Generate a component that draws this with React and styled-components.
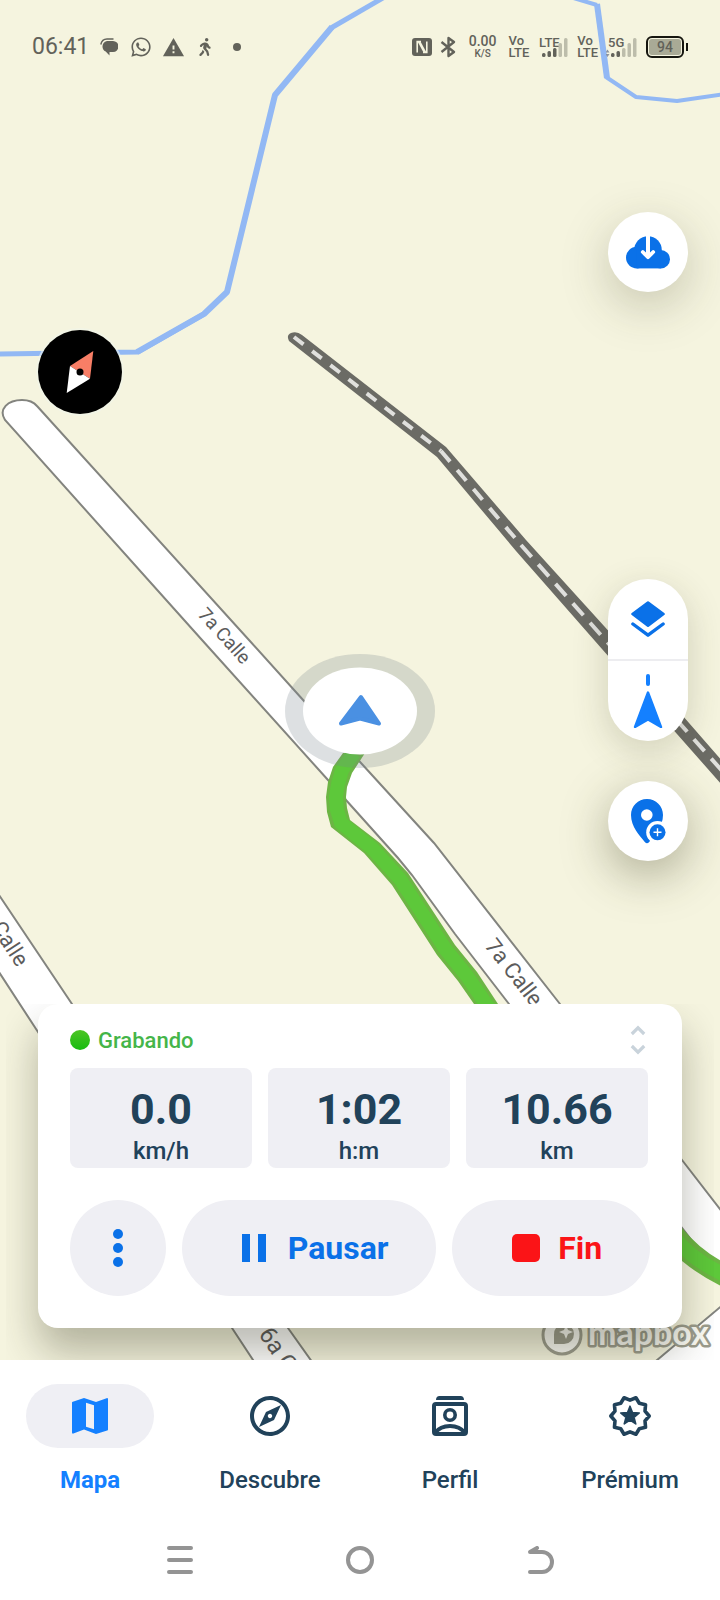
import React from 'react';
import styled, { createGlobalStyle } from 'styled-components';
import { MdOutlineExplore, MdWarning } from 'react-icons/md';
import { FaWalking, FaWhatsapp } from 'react-icons/fa';

const colors = {
	land: '#f5f4df',
	river: '#92b8f4',
	rail: '#6b6b65',
	casing: '#83847f',
	status: '#62625a',
	blue: '#0a71e8',
	bright: '#1480ff',
	navy: '#21425a',
	surface: '#efeff4',
	system: '#949494'
};

const GlobalStyle = createGlobalStyle`
	* { box-sizing: border-box; }
	body {
		margin: 0;
		background: #fff;
		font-family: Roboto, 'Liberation Sans', sans-serif;
	}
	button {
		margin: 0;
		padding: 0;
		border: 0;
		background: none;
		font: inherit;
		color: inherit;
		cursor: pointer;
	}
	svg { display: block; flex: none; }
`;

const Screen = styled.div`
	display: flex;
	flex-direction: column;
	min-height: 100vh;
`;

const MapArea = styled.main`
	position: relative;
	flex: 1;
	display: flex;
	flex-direction: column;
	overflow: hidden;
	padding-bottom: 32px;
	background: ${colors.land};
`;

const MapCanvas = styled.svg`
	position: absolute;
	inset: 0;
	width: 100%;
	height: 100%;
	z-index: 0;
`;

const RoadLabel = styled.text`
	font-size: ${({ $size }) => $size}px;
	fill: #5c5c5c;
	stroke: #fff;
	stroke-width: 2px;
	paint-order: stroke;
`;

const Wordmark = styled.text`
	font-family: Lato, sans-serif;
	font-size: 34px;
	font-weight: 700;
	fill: #fafaf4;
	stroke: #9c9c8d;
	stroke-width: 5px;
	stroke-linejoin: round;
	paint-order: stroke;
`;

const StatusBar = styled.header`
	position: relative;
	display: flex;
	justify-content: space-between;
	align-items: center;
	height: 94px;
	padding: 0 32px;
	color: ${colors.status};
`;

const StatusGroup = styled.div`
	display: flex;
	align-items: center;
	gap: ${({ $gap }) => $gap}px;
`;

const Clock = styled.time`
	font-size: 23px;
	line-height: 28px;
`;

const Notifications = styled.div`
	display: grid;
	grid-template-columns: repeat(5, 32px);
	align-items: center;
	justify-items: center;
`;

const StackedText = styled.div`
	display: flex;
	flex-direction: column;
	align-items: flex-start;
	font-size: 13px;
	font-weight: 500;
	line-height: 12px;
`;

const RateText = styled(StackedText)`
	align-items: center;
	width: 36px;
`;

const Rate = styled.span`
	font-size: 14px;
	line-height: 13px;
`;

const RateUnit = styled.span`
	font-size: 10px;
`;

const SignalText = styled.text`
	font-size: 13px;
	font-weight: 500;
	fill: ${colors.status};
`;

const Battery = styled.div`
	display: flex;
	align-items: center;
	gap: 2px;

	&::after {
		content: '';
		width: 2px;
		height: 8px;
		background: #16160f;
	}
`;

const BatteryBody = styled.div`
	width: 38px;
	height: 22px;
	padding: 1px;
	border: 2px solid #16160f;
	border-radius: 6px;
`;

const BatteryLevel = styled.div`
	border-radius: 3px;
	background: #a9aa96;
	font-size: 14px;
	font-weight: 500;
	line-height: 16px;
	text-align: center;
`;

const Controls = styled.div`
	position: relative;
	flex: 1;
	display: flex;
	justify-content: space-between;
	padding: 118px 32px 143px 38px;
`;

const CompassButton = styled.button`
	align-self: flex-start;
	margin-top: 118px;
	border-radius: 50%;
	box-shadow: 0 0 0 2px rgba(240, 245, 235, 0.6);
`;

const ControlColumn = styled.div`
	display: flex;
	flex-direction: column;
	gap: 40px;
`;

const RoundButton = styled.button`
	display: flex;
	align-items: center;
	justify-content: center;
	width: 80px;
	height: 80px;
	border-radius: 50%;
	background: #fff;
	color: ${colors.blue};
	box-shadow: 0 14px 48px rgba(60, 60, 30, ${({ $depth }) => $depth || 0.25});
`;

const ButtonStack = styled.div`
	display: flex;
	flex-direction: column;
	margin-top: auto;
	border-radius: 40px;
	background: #fff;
	box-shadow: 0 10px 36px rgba(60, 60, 30, 0.2);
`;

const StackButton = styled.button`
	display: flex;
	align-items: center;
	justify-content: center;
	width: 80px;
	height: 80px;
	color: ${({ $active }) => ($active ? colors.bright : colors.blue)};

	& + & {
		height: 82px;
		border-top: 2px solid #ededf0;
	}
`;

const RecordCard = styled.section`
	position: relative;
	margin: 0 38px;
	padding: 0 32px 32px;
	border-radius: 20px;
	background: #fff;
	box-shadow: 0 24px 40px rgba(40, 40, 20, 0.32);
	clip-path: inset(0 -32px -32px -32px);
`;

const CardHeader = styled.div`
	display: flex;
	align-items: center;
	justify-content: space-between;
	height: 64px;
	padding-top: 8px;
`;

const Recording = styled.div`
	display: flex;
	align-items: center;
	gap: 8px;
	color: #45b549;
	font-size: 22px;
	font-weight: 500;

	&::before {
		content: '';
		width: 20px;
		height: 20px;
		border-radius: 50%;
		background: linear-gradient(#4cc424, #18bc10);
	}
`;

const ExpandButton = styled.button`
	display: flex;
	justify-content: center;
	width: 24px;
	color: #c9d3db;
`;

const Stats = styled.div`
	display: grid;
	grid-template-columns: repeat(3, 1fr);
	gap: 16px;
	padding-right: 2px;
`;

const Stat = styled.div`
	display: flex;
	flex-direction: column;
	align-items: center;
	padding-top: 16px;
	border-radius: 8px;
	background: ${colors.surface};
	color: ${colors.navy};
`;

const StatValue = styled.strong`
	font-size: 43px;
	font-weight: 700;
	line-height: 50px;
`;

const StatUnit = styled.span`
	font-size: 24px;
	font-weight: 500;
	line-height: 34px;
`;

const Actions = styled.div`
	display: grid;
	grid-template-columns: 96px 9fr 7fr;
	gap: 16px;
	margin-top: 32px;
`;

const ActionButton = styled.button`
	display: flex;
	align-items: center;
	justify-content: center;
	gap: 18px;
	height: 96px;
	border-radius: 48px;
	background: ${colors.surface};
	color: ${({ $danger }) => ($danger ? '#fb1417' : colors.blue)};
	font-size: 32px;
	font-weight: 700;
`;

const WideActionButton = styled(ActionButton)`
	padding-left: 12px;
`;

const TabBar = styled.nav`
	display: grid;
	grid-template-columns: repeat(4, 1fr);
	padding: 24px 0;
	background: #fff;
`;

const Tab = styled.a`
	display: flex;
	flex-direction: column;
	align-items: center;
	gap: 16px;
	color: ${({ $active }) => ($active ? colors.bright : colors.navy)};
	font-size: 24px;
	font-weight: ${({ $active }) => ($active ? 700 : 500)};
	line-height: 32px;
	text-decoration: none;
`;

const TabPill = styled.span`
	display: flex;
	align-items: center;
	justify-content: center;
	width: 128px;
	height: 64px;
	border-radius: 32px;
	background: ${({ $active }) => ($active ? colors.surface : 'transparent')};
`;

const SystemBar = styled.div`
	display: grid;
	grid-template-columns: repeat(3, 1fr);
	height: 80px;
	padding: 0 12.5%;
	background: #fff;
	color: ${colors.system};
`;

const SystemButton = styled.button`
	display: flex;
	align-items: center;
	justify-content: center;
`;

// closed star outline with `count` tips, centred on a 24x24 grid
const starPath = (count, outer, inner, start = -90) => {
	const points = [];
	for (let i = 0; i < count * 2; i++) {
		const radius = i % 2 ? inner : outer;
		const angle = ((start + (i * 180) / count) * Math.PI) / 180;
		points.push(`${(12 + radius * Math.cos(angle)).toFixed(2)} ${(12 + radius * Math.sin(angle)).toFixed(2)}`);
	}
	return `M${points.join('L')}z`;
};

const ChatIcon = () => (
	<svg width='18' height='18' viewBox='0 0 18 18' fill='currentColor'>
		<path d='M7 3h6a5 5 0 0 1 0 11h-3.500v3.500l-3.800-4C1 11.500 1.500 4 7 3z' />
		<path d='M.8 6.500C1.500 3 4 1 7 1h6.500' fill='none' stroke='currentColor' strokeWidth='1.400' />
	</svg>
);

const NfcIcon = () => (
	<svg width='20' height='20' viewBox='0 0 20 20' fill='none'>
		<rect x='0' y='1' width='20' height='18' rx='3' fill='currentColor' />
		<path d='M9 4.500H5.200v11M11 15.500h3.800v-11' stroke={colors.land} strokeWidth='1.600' />
		<path d='M5.500 4.500h3l6 11h-3z' fill={colors.land} />
	</svg>
);

const BluetoothIcon = () => (
	<svg width='17' height='22' viewBox='0 0 17 22' fill='none' stroke='currentColor' strokeWidth='2.400'>
		<path d='M1.500 6L14 16 8.500 20V2L14 6 1.500 16' strokeLinejoin='round' />
	</svg>
);

const Signal = ({ label, level, traffic }) => (
	<svg width='32' height='24' viewBox='0 0 32 24'>
		<SignalText x='2' y='12'>{label}</SignalText>
		{traffic && <path d='M-.5 17.500h4L1.500 14.500zM-.5 19h4l-2 3z' fill='#8c93a0' />}
		{[4, 6, 9, 14, 19].map((height, i) => (
			<rect
				key={height}
				x={5 + i * 5.5}
				y={22 - height}
				width='3.500'
				height={height}
				rx='1.500'
				fill={i < level ? colors.status : '#bdbdab'}
			/>
		))}
	</svg>
);

const CompassIcon = () => (
	<svg width='84' height='84' viewBox='0 0 84 84'>
		<circle cx='42' cy='42' r='42' />
		<path d='M55.300 21L32 36l20 12.700z' fill='#f87e66' />
		<path d='M28.700 63L32 36l20 12.700z' fill='#fff' />
		<circle cx='42' cy='42' r='3.500' />
	</svg>
);

const CloudIcon = () => (
	<svg width='44' height='33' viewBox='0 0 44 33' fill='none'>
		<g fill='currentColor'>
			<circle cx='22' cy='14' r='13.800' />
			<circle cx='10.800' cy='21.600' r='10.800' />
			<circle cx='34.800' cy='23.200' r='9.200' />
			<path d='M10.800 14h24v18.400h-24z' />
		</g>
		<path d='M22-1v20' stroke='#fff' strokeWidth='4' />
		<path d='M16.800 16l5.200 5.200 5.200-5.200' stroke='#fff' strokeWidth='3.800' strokeLinecap='round' strokeLinejoin='round' />
	</svg>
);

const LayersIcon = () => (
	<svg width='34' height='37' viewBox='0 0 34 37' fill='none' stroke='currentColor' strokeLinejoin='round' strokeLinecap='round'>
		<path d='M17 1.500l15.500 11.500L17 24.700 1.500 13z' fill='currentColor' strokeWidth='2.600' />
		<path d='M1.900 23L17 34.200 32.100 23' strokeWidth='3.400' />
	</svg>
);

const HeadingIcon = () => (
	<svg width='30' height='54' viewBox='0 0 30 54' fill='currentColor' stroke='currentColor' strokeLinejoin='round' strokeLinecap='round'>
		<path d='M15 2v8' strokeWidth='4' />
		<path d='M15 18.500L28 53l-13-7.500L2 53z' strokeWidth='2.400' />
	</svg>
);

const AddPlaceIcon = () => (
	<svg width='35' height='45' viewBox='0 0 35 45'>
		<path
			d='M16 0C7 0 0 7 0 16c0 12 8.500 20.500 14 27.200q2 2 4 0C23.500 36.500 32 28 32 16 32 7 25 0 16 0z'
			fill='currentColor'
		/>
		<circle cx='15.800' cy='16' r='5.800' fill='#fff' />
		<circle cx='26.500' cy='33.300' r='11.300' fill='#fff' />
		<circle cx='26.500' cy='33.300' r='8' fill='currentColor' />
		<path d='M22.500 33.300h8M26.500 29.300v8' stroke='#fff' strokeWidth='1.400' />
	</svg>
);

const ExpandIcon = () => (
	<svg width='16' height='30' viewBox='0 0 16 30' fill='none' stroke='currentColor' strokeWidth='3.200'>
		<path d='M1.800 9L8 2.800 14.200 9M1.800 21L8 27.200l6.200-6.200' />
	</svg>
);

const MoreIcon = () => (
	<svg width='10' height='38' viewBox='0 0 10 38' fill='currentColor'>
		<circle cx='5' cy='5' r='5' />
		<circle cx='5' cy='19' r='5' />
		<circle cx='5' cy='33' r='5' />
	</svg>
);

const PauseIcon = () => (
	<svg width='28' height='28' viewBox='0 0 28 28' fill='currentColor'>
		<path d='M0 0h8v28H0zM16 0h8v28h-8z' />
	</svg>
);

const StopIcon = () => (
	<svg width='28' height='28' viewBox='0 0 28 28' fill='currentColor'>
		<rect width='28' height='28' rx='5' />
	</svg>
);

const MapIcon = () => (
	<svg width='48' height='48' viewBox='0 0 24 24' fill='currentColor' fillRule='evenodd'>
		<path d='M3 5.400q0-.4.400-.5L9 3l6 2 5.300-1.900q.7-.2.700.5V18.700q0 .4-.4.500L15 21l-6-2.200-5.300 2q-.7.200-.7-.5zM10 5.350v12l4 1.250V6.600z' />
	</svg>
);

const ProfileIcon = () => (
	<svg width='48' height='48' viewBox='0 0 24 24' fill='none' stroke='currentColor' strokeWidth='2'>
		<path d='M5 4c0-1.200.7-2 1.700-2h10.600c1 0 1.700.8 1.700 2z' fill='currentColor' stroke='none' />
		<rect x='4' y='6' width='16' height='15' rx='1' />
		<circle cx='12' cy='11.500' r='2.600' strokeWidth='1.800' />
		<path d='M4.500 20.500C8 15.900 16 15.900 19.500 20.500' />
	</svg>
);

const PremiumIcon = () => (
	<svg width='48' height='48' viewBox='0 0 24 24' stroke='currentColor' strokeLinejoin='round'>
		<path d={starPath(10, 9.6, 7.9, 0)} fill='none' strokeWidth='1.800' />
		<path d={starPath(5, 4.9, 2.1)} fill='currentColor' strokeWidth='.8' />
	</svg>
);

const RecentsIcon = () => (
	<svg width='28' height='28' viewBox='0 0 28 28' fill='none' stroke='currentColor' strokeWidth='4' strokeLinecap='round'>
		<path d='M3 2h22M3 14h22M3 26h22' />
	</svg>
);

const HomeIcon = () => (
	<svg width='28' height='28' viewBox='0 0 28 28' fill='none' stroke='currentColor' strokeWidth='4'>
		<circle cx='14' cy='14' r='12' />
	</svg>
);

const BackIcon = () => (
	<svg width='28' height='28' viewBox='0 0 28 28' fill='none' stroke='currentColor' strokeWidth='4' strokeLinecap='round' strokeLinejoin='round'>
		<path d='M4 26h12a10 10 0 0 0 0-20H4l7-4' />
	</svg>
);

const MapView = () => (
	<MapCanvas viewBox='0 0 720 1360' preserveAspectRatio='xMidYMid slice' role='img' aria-label='Mapa'>
		<g fill='none' stroke={colors.river} strokeLinejoin='bevel'>
			<path d='M-5 354L138 352 204 314' strokeWidth='5' />
			<path d='M137 352L204 314 227 292 275 95 332 27' strokeWidth='6' />
			<path d='M331 28L388-5' strokeWidth='5' />
			<path d='M570-3L597 5' strokeWidth='4' />
			<path d='M597 4L607 78' strokeWidth='6' />
			<path d='M606 77L636 97 677 101 725 94' strokeWidth='4' />
		</g>

		<path
			d='M289 341Q286 335 291 333 297 331 302 335L446 447 526 540 614 637 730 770 722 785 602 649 516 551 437 457z'
			fill={colors.rail}
		/>
		<g fill='none' stroke='#e0e0dd' strokeWidth='4'>
			<path d='M294 337L441 451' strokeDasharray='12 11' />
			<path d='M441 451L521 545' strokeDasharray='14 11' />
			<path d='M521 545L608 643 724 773' strokeDasharray='16 10' />
		</g>

		<g fill='#fff' stroke={colors.casing} strokeWidth='2'>
			<path d='M-5 889L72 1004 288 1328 315 1366 257 1366 232 1328 38 1032-5 966z' />
			<path d='M725 1303L650 1366H725z' />
			<path d='M5 420C-2 409 8 400 22 400Q32 400 37 406L249 640 304 701 361 763 434 843 560 1004 682 1160 730 1222V1290L509 1004 455 934 412 875 398 858 328 780 202 640z' />
		</g>

		<path
			d='M343 753L333 767 328 782 326 797 327 812 331 827 364 853 392 885 437 955 458 981 474 1004 560 1120 668 1246 682 1261Q700 1276 725 1288V1263Q700 1250 682 1228L600 1120 498 1004 477 972 455 945 408 873 380 843 350 820 347 808 346 797 347 787 352 773 365 753z'
			fill='#6cb544'
		/>
		<path
			d='M354 753L342 770 338 784 336 797 337 810 341 823 372 848 400 879 446 950 467 976 486 1004 580 1120 675 1238Q692 1260 725 1275'
			fill='none'
			stroke='#5dc83a'
			strokeWidth='14'
		/>

		<RoadLabel $size={19} transform='translate(197 615) rotate(48)'>7a Calle</RoadLabel>
		<RoadLabel $size={22} transform='translate(484 946) rotate(52)'>7a Calle</RoadLabel>
		<RoadLabel $size={22} transform='translate(17 968) rotate(57)' textAnchor='end'>7a Calle</RoadLabel>
		<RoadLabel $size={24} transform='translate(258 1334) rotate(56)'>6a Calle</RoadLabel>

		<ellipse cx='360' cy='711' rx='75' ry='57' fill='rgba(119,131,140,.25)' />
		<ellipse cx='360' cy='711' rx='57' ry='43.500' fill='#fff' />
		<path
			d='M361 697L379 723.500 360 718.500 341 723.500z'
			fill='#4a90e2'
			stroke='#4a90e2'
			strokeWidth='4'
			strokeLinejoin='round'
		/>

		<circle cx='562' cy='1335' r='19' fill='#fafaf4' stroke='#9c9c8d' strokeWidth='3' />
		<path d='M554 1344v-9a10 10 0 1 1 10 9z' fill='#9c9c8d' />
		<path d='M566 1325l2 5 5 2-5 2-2 5-2-5-5-2 5-2z' fill='#fafaf4' />
		<Wordmark x='588' y='1345'>mapbox</Wordmark>
	</MapCanvas>
);

const stats = [
	{ value: '0.0', unit: 'km/h' },
	{ value: '1:02', unit: 'h:m' },
	{ value: '10.66', unit: 'km' }
];

const tabs = [
	{ label: 'Mapa', icon: <MapIcon />, active: true },
	{ label: 'Descubre', icon: <MdOutlineExplore size={48} /> },
	{ label: 'Perfil', icon: <ProfileIcon /> },
	{ label: 'Prémium', icon: <PremiumIcon /> }
];

const PhoneStatus = () => (
	<StatusBar>
		<StatusGroup $gap={4}>
			<Clock>06:41</Clock>
			<Notifications>
				<ChatIcon />
				<FaWhatsapp size={22} />
				<MdWarning size={23} />
				<FaWalking size={18} />
				<svg width='8' height='8' viewBox='0 0 8 8' fill='currentColor'>
					<circle cx='4' cy='4' r='4' />
				</svg>
			</Notifications>
		</StatusGroup>
		<StatusGroup $gap={8}>
			<NfcIcon />
			<BluetoothIcon />
			<RateText>
				<Rate>0.00</Rate>
				<RateUnit>K/S</RateUnit>
			</RateText>
			<StackedText>
				<span>Vo</span>
				<span>LTE</span>
			</StackedText>
			<Signal label='LTE' level={3} />
			<StackedText>
				<span>Vo</span>
				<span>LTE</span>
			</StackedText>
			<Signal label='5G' level={2} traffic />
			<Battery>
				<BatteryBody>
					<BatteryLevel>94</BatteryLevel>
				</BatteryBody>
			</Battery>
		</StatusGroup>
	</StatusBar>
);

const RecordPanel = () => (
	<RecordCard>
		<CardHeader>
			<Recording>Grabando</Recording>
			<ExpandButton type='button' aria-label='Expandir'>
				<ExpandIcon />
			</ExpandButton>
		</CardHeader>
		<Stats>
			{stats.map(({ value, unit }) => (
				<Stat key={unit}>
					<StatValue>{value}</StatValue>
					<StatUnit>{unit}</StatUnit>
				</Stat>
			))}
		</Stats>
		<Actions>
			<ActionButton type='button' aria-label='Más opciones'>
				<MoreIcon />
			</ActionButton>
			<WideActionButton type='button'>
				<PauseIcon />
				Pausar
			</WideActionButton>
			<WideActionButton type='button' $danger>
				<StopIcon />
				Fin
			</WideActionButton>
		</Actions>
	</RecordCard>
);

const App = () => {
	return (
		<Screen>
			<GlobalStyle />
			<MapArea>
				<MapView />
				<PhoneStatus />
				<Controls>
					<CompassButton type='button' aria-label='Brújula'>
						<CompassIcon />
					</CompassButton>
					<ControlColumn>
						<RoundButton type='button' aria-label='Descargar mapa'>
							<CloudIcon />
						</RoundButton>
						<ButtonStack>
							<StackButton type='button' aria-label='Capas'>
								<LayersIcon />
							</StackButton>
							<StackButton type='button' aria-label='Orientación' $active>
								<HeadingIcon />
							</StackButton>
						</ButtonStack>
						<RoundButton type='button' aria-label='Añadir lugar' $depth={0.4}>
							<AddPlaceIcon />
						</RoundButton>
					</ControlColumn>
				</Controls>
				<RecordPanel />
			</MapArea>
			<TabBar>
				{tabs.map(({ label, icon, active }) => (
					<Tab key={label} href='#' $active={active}>
						<TabPill $active={active}>{icon}</TabPill>
						{label}
					</Tab>
				))}
			</TabBar>
			<SystemBar>
				<SystemButton type='button' aria-label='Recientes'>
					<RecentsIcon />
				</SystemButton>
				<SystemButton type='button' aria-label='Inicio'>
					<HomeIcon />
				</SystemButton>
				<SystemButton type='button' aria-label='Atrás'>
					<BackIcon />
				</SystemButton>
			</SystemBar>
		</Screen>
	);
};

export default App;
